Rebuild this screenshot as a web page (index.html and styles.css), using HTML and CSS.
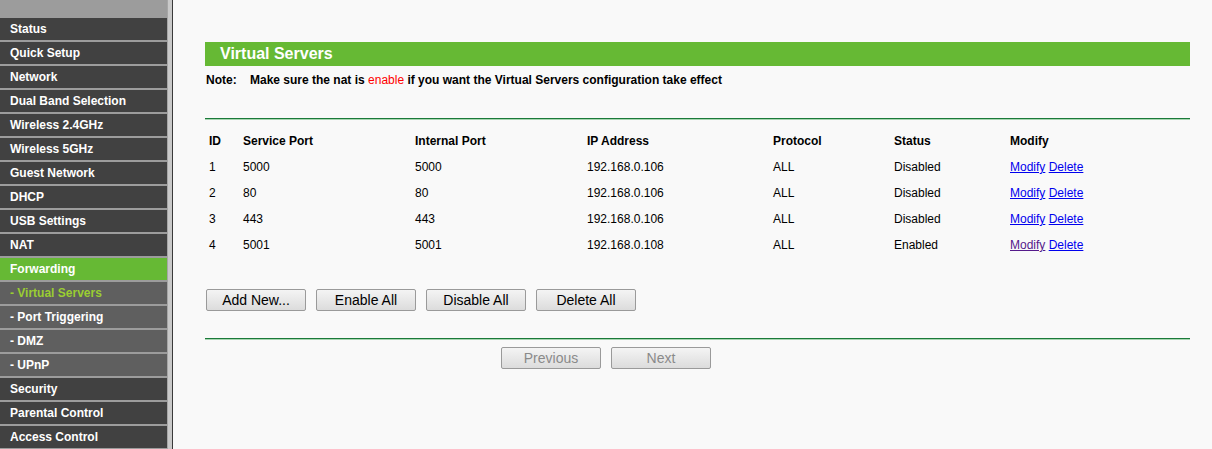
FILE: index.html
```html
<!DOCTYPE html>
<html>
<head>
<meta charset="utf-8">
<link rel="stylesheet" href="styles.css">
</head>
<body>
<div class="page">
  <nav class="sidebar">
    <div class="menu">
      <div class="menu-top"></div>
      <a class="item">Status</a>
      <a class="item">Quick Setup</a>
      <a class="item">Network</a>
      <a class="item">Dual Band Selection</a>
      <a class="item">Wireless 2.4GHz</a>
      <a class="item">Wireless 5GHz</a>
      <a class="item">Guest Network</a>
      <a class="item">DHCP</a>
      <a class="item">USB Settings</a>
      <a class="item">NAT</a>
      <a class="item active">Forwarding</a>
      <a class="item sub current">- Virtual Servers</a>
      <a class="item sub">- Port Triggering</a>
      <a class="item sub">- DMZ</a>
      <a class="item sub">- UPnP</a>
      <a class="item">Security</a>
      <a class="item">Parental Control</a>
      <a class="item">Access Control</a>
    </div>
    <div class="rail"></div>
  </nav>
  <main class="content">
    <h1 class="title">Virtual Servers</h1>
    <p class="note"><span class="note-label">Note:</span>Make sure the nat is <span class="red">enable</span> if you want the Virtual Servers configuration take effect</p>
    <div class="rule"></div>
    <table class="list">
      <colgroup>
        <col style="width:34px"><col style="width:172px"><col style="width:172px"><col style="width:186px"><col style="width:121px"><col style="width:116px"><col>
      </colgroup>
      <thead>
        <tr><th>ID</th><th>Service Port</th><th>Internal Port</th><th>IP Address</th><th>Protocol</th><th>Status</th><th>Modify</th></tr>
      </thead>
      <tbody>
        <tr><td>1</td><td>5000</td><td>5000</td><td>192.168.0.106</td><td>ALL</td><td>Disabled</td><td><a class="lnk" href="#">Modify</a> <a class="lnk" href="#">Delete</a></td></tr>
        <tr><td>2</td><td>80</td><td>80</td><td>192.168.0.106</td><td>ALL</td><td>Disabled</td><td><a class="lnk" href="#">Modify</a> <a class="lnk" href="#">Delete</a></td></tr>
        <tr><td>3</td><td>443</td><td>443</td><td>192.168.0.106</td><td>ALL</td><td>Disabled</td><td><a class="lnk" href="#">Modify</a> <a class="lnk" href="#">Delete</a></td></tr>
        <tr><td>4</td><td>5001</td><td>5001</td><td>192.168.0.108</td><td>ALL</td><td>Enabled</td><td><a class="lnk visited" href="#">Modify</a> <a class="lnk" href="#">Delete</a></td></tr>
      </tbody>
    </table>
    <div class="actions">
      <button class="btn">Add New...</button>
      <button class="btn">Enable All</button>
      <button class="btn">Disable All</button>
      <button class="btn">Delete All</button>
    </div>
    <div class="rule rule2"></div>
    <div class="pager">
      <button class="btn disabled">Previous</button>
      <button class="btn disabled">Next</button>
    </div>
  </main>
</div>
</body>
</html>
```

FILE: styles.css
```css
html, body {
  margin: 0;
  padding: 0;
  background: #f9f9f9;
  font-family: "Liberation Sans", Arial, sans-serif;
}
.page {
  display: flex;
  height: 449px;
  overflow: hidden;
}
.sidebar {
  display: flex;
  width: 173px;
  flex: none;
  background: #c9c9c9;
}
.menu {
  width: 167px;
  display: flex;
  flex-direction: column;
  gap: 2px;
  background: #9c9c9c;
  border-right: 1px solid #a6a6a6;
}
.menu-top {
  height: 16px;
  background: #9c9c9c;
}
.item {
  display: block;
  height: 22px;
  line-height: 22px;
  padding-left: 10px;
  background: #414141;
  color: #ffffff;
  font-size: 12px;
  font-weight: bold;
  white-space: nowrap;
}
.item.active {
  background: #66b934;
}
.item.sub {
  background: #5f5f5f;
}
.item.sub.current {
  color: #9acd32;
}
.rail {
  flex: 1;
  border-right: 1px solid #3a3a3a;
}
.content {
  flex: 1;
  padding: 42px 22px 0 32px;
}
.title {
  margin: 0;
  height: 24px;
  line-height: 24px;
  background: #66b934;
  color: #ffffff;
  font-size: 16px;
  font-weight: bold;
  padding-left: 15px;
}
.note {
  margin: 7px 0 0 0;
  height: 14px;
  line-height: 14px;
  font-size: 12px;
  font-weight: bold;
  color: #000;
  padding-left: 1px;
}
.note-label {
  display: inline-block;
  width: 44px;
}
.red {
  color: #ff0000;
  font-weight: normal;
}
.rule {
  margin-top: 31px;
  height: 1px;
  background: #1b7a3a;
  border-bottom: 1px solid #a8d5b2;
}
.list {
  margin-top: 8px;
  border-collapse: collapse;
  width: 100%;
  table-layout: fixed;
  font-size: 12px;
  color: #000;
}
.list th, .list td {
  height: 26px;
  padding: 0 0 0 4px;
  text-align: left;
  white-space: nowrap;
}
.list th {
  font-weight: bold;
}
.lnk {
  color: #0000ee;
  text-decoration: underline;
}
.lnk.visited {
  color: #551a8b;
}
.actions {
  display: flex;
  gap: 10px;
  margin-top: 31px;
  padding-left: 1px;
}
.btn {
  width: 100px;
  height: 22px;
  padding: 0;
  font-family: "Liberation Sans", Arial, sans-serif;
  font-size: 14px;
  color: #000;
  background: linear-gradient(#f4f4f4, #dcdcdc);
  border: 1px solid #9a9a9a;
  border-radius: 2px;
}
.btn.disabled {
  color: #8a8a8a;
}
.rule2 {
  margin-top: 27px;
}
.pager {
  display: flex;
  gap: 10px;
  margin-top: 7px;
  padding-left: 296px;
}
```
